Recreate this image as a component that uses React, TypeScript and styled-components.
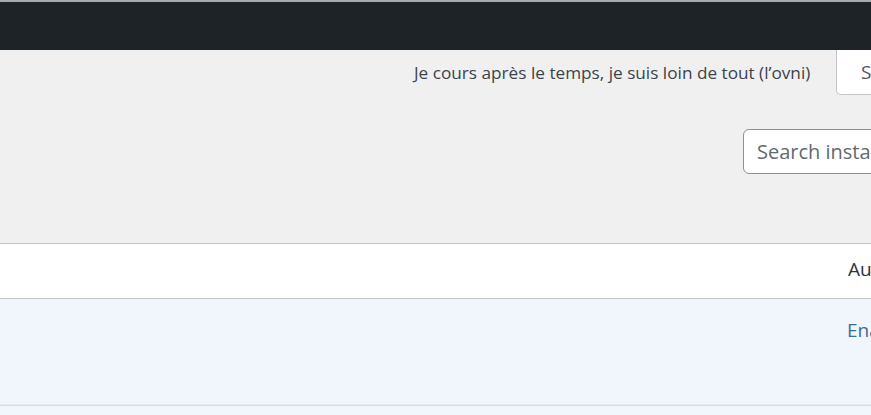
import React from "react";
import styled, { createGlobalStyle } from "styled-components";

const Global = createGlobalStyle`
  html, body { margin: 0; padding: 0; overflow: hidden; background: #f0f0f1; }
  body { font-family: "Open Sans", "Noto Sans", sans-serif; }
`;

const Page = styled.div`
  width: 1100px;
  height: 415px;
  overflow: hidden;
  display: flex;
  flex-direction: column;
`;

const AdminBar = styled.div`
  height: 48px;
  flex: none;
  background: #1d2327;
  border-top: 2px solid #a7aaad;
`;

const Header = styled.div`
  height: 193px;
  flex: none;
  display: flex;
  flex-direction: column;
`;

const TopRow = styled.div`
  display: flex;
  align-items: flex-start;
  padding-left: 414px;
  gap: 24px;
`;

const Dolly = styled.p`
  margin: 0;
  padding-top: 11px;
  font-size: 17.2px;
  line-height: 24px;
  color: #3c434a;
  white-space: nowrap;
  width: 398px;
`;

const ScreenButton = styled.button`
  height: 45px;
  padding: 0 24px;
  background: #fff;
  border: 1px solid #c3c4c7;
  border-top: none;
  border-radius: 0 0 5px 5px;
  font-family: inherit;
  font-size: 19px;
  color: #50575e;
  white-space: nowrap;
  box-sizing: border-box;
`;

const SearchRow = styled.div`
  padding-left: 743px;
  padding-top: 34px;
`;

const SearchInput = styled.input`
  width: 330px;
  height: 45px;
  box-sizing: border-box;
  border: 1px solid #8c8f94;
  border-radius: 6px;
  background: #fff;
  padding: 0 13px;
  font-family: inherit;
  font-size: 20px;
  color: #2c3338;
  &::placeholder { color: #646970; }
`;

const Table = styled.div`
  border-top: 1px solid #c3c4c7;
  display: flex;
  flex-direction: column;
  flex: 1;
`;

const HeadRow = styled.div`
  height: 54px;
  flex: none;
  background: #fff;
  border-bottom: 1px solid #c3c4c7;
  display: grid;
  grid-template-columns: 848px 1fr;
  align-items: center;
`;

const HeadCell = styled.div`
  font-size: 19px;
  color: #2c3338;
  white-space: nowrap;
  padding-bottom: 4px;
`;

const BodyRow = styled.div<{ $h: number }>`
  height: ${(p) => p.$h}px;
  flex: none;
  background: #f0f6fc;
  border-bottom: 1px solid #dcdcde;
  box-shadow: inset 0 -1px 0 #e6e9ee;
  display: grid;
  grid-template-columns: 847px 1fr;
  align-items: start;
  box-sizing: border-box;
`;

const Link = styled.a`
  display: block;
  padding-top: 18px;
  font-size: 19px;
  color: #3a6c9a;
  text-decoration: none;
  white-space: nowrap;
`;

export default function App() {
  return (
    <Page>
      <Global />
      <AdminBar />
      <Header>
        <TopRow>
          <Dolly>Je cours après le temps, je suis loin de tout (l’ovni)</Dolly>
          <ScreenButton>Screen Options</ScreenButton>
        </TopRow>
        <SearchRow>
          <SearchInput placeholder="Search installed plugins..." />
        </SearchRow>
      </Header>
      <Table>
        <HeadRow>
          <div />
          <HeadCell>Automatic Updates</HeadCell>
        </HeadRow>
        <BodyRow $h={107}>
          <div />
          <Link href="#">Enable auto-updates</Link>
        </BodyRow>
        <BodyRow $h={107}>
          <div />
          <div />
        </BodyRow>
      </Table>
    </Page>
  );
}
